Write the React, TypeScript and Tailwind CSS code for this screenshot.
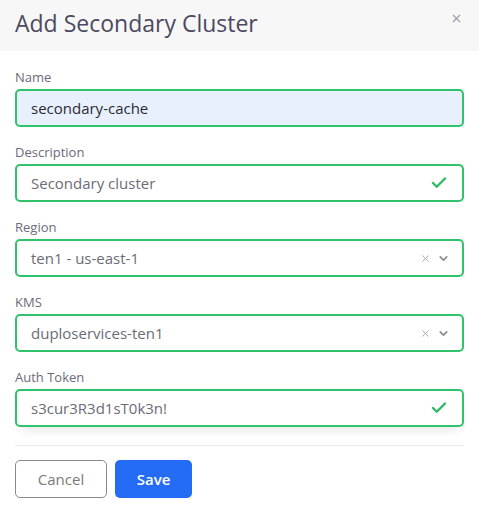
import { X, ChevronDown, Check } from 'lucide-react';

const font = { fontFamily: '"Open Sans", "Liberation Sans", sans-serif' };

function Label({ children }: { children: string }) {
  return <label className="block text-[13px] text-[#6b6b78] leading-4 mb-[4px]">{children}</label>;
}

function TextField({ label, value, filled, valid }: { label: string; value: string; filled?: boolean; valid?: boolean }) {
  return (
    <div>
      <Label>{label}</Label>
      <div
        className={`h-[38px] flex items-center border-2 border-[#2fc46b] rounded-[5px] px-[14px] ${
          filled ? 'bg-[#e8f0fe]' : 'bg-white'
        }`}
      >
        <span className={`flex-1 text-[15px] ${filled ? 'text-[#2b2b33]' : 'text-[#6c6c76]'}`}>{value}</span>
        {valid && <Check className="w-[18px] h-[18px] text-[#2fb865]" strokeWidth={3.2} />}
      </div>
    </div>
  );
}

function SelectField({ label, value }: { label: string; value: string }) {
  return (
    <div>
      <Label>{label}</Label>
      <div className="h-[38px] flex items-center border-2 border-[#2fc46b] rounded-[5px] pl-[14px] pr-[12px] bg-white">
        <span className="flex-1 text-[15px] text-[#6c6c76]">{value}</span>
        <X className="w-[11px] h-[11px] text-[#a3a3ab] mr-[6px]" strokeWidth={2} />
        <ChevronDown className="w-[13px] h-[13px] text-[#8a8a92]" strokeWidth={3} />
      </div>
    </div>
  );
}

export default function App() {
  return (
    <div style={font} className="w-[479px] h-[520px] bg-white overflow-hidden">
      <div className="h-[51px] bg-[#f7f7f7] flex items-center justify-between pl-[15px] pr-[16px]">
        <h2 className="text-[23px] text-[#4b4a5f] leading-none -mt-[4px]">Add Secondary Cluster</h2>
        <X className="w-[13px] h-[13px] text-[#9c9ca5] -mt-[14px]" strokeWidth={2} />
      </div>
      <div className="px-[15px] pt-[18px] flex flex-col gap-[17px]">
        <TextField label="Name" value="secondary-cache" filled />
        <TextField label="Description" value="Secondary cluster" valid />
        <SelectField label="Region" value="ten1 - us-east-1" />
        <SelectField label="KMS" value="duploservices-ten1" />
        <div>
          <Label>Auth Token</Label>
          <div className="h-[38px] flex items-center border-2 border-[#2fc46b] rounded-[5px] px-[14px] bg-white shadow-[0_8px_12px_-6px_rgba(0,0,0,0.12)]">
            <span className="flex-1 text-[15px] text-[#6c6c76]">s3cur3R3d1sT0k3n!</span>
            <Check className="w-[18px] h-[18px] text-[#2fb865]" strokeWidth={3.2} />
          </div>
        </div>
      </div>
      <div className="mx-[15px] mt-[18px] border-t border-[#ececec]" />
      <div className="px-[15px] pt-[14px] flex gap-[8px]">
        <button className="w-[92px] h-[38px] border border-[#8a8a8a] rounded-[5px] text-[15px] text-[#7a7a7a] bg-white">
          Cancel
        </button>
        <button className="w-[77px] h-[38px] rounded-[5px] text-[15px] font-semibold text-white bg-[#246bf5]">
          Save
        </button>
      </div>
    </div>
  );
}
